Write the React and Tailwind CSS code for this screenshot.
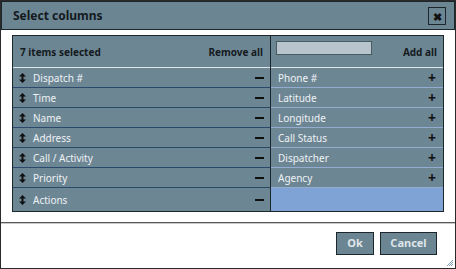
import React from "react";

const selected = ["Dispatch #", "Time", "Name", "Address", "Call / Activity", "Priority", "Actions"];
const available = ["Phone #", "Latitude", "Longitude", "Call Status", "Dispatcher", "Agency"];

const SortIcon = () => (
  <svg width="7" height="10" viewBox="0 0 7 10" className="shrink-0">
    <path d="M3.5 0 L7 3.5 H4.5 V6.5 H7 L3.5 10 L0 6.5 H2.5 V3.5 H0 Z" fill="#111" />
  </svg>
);

const SelectedRow = ({ label, last }) => (
  <div
    className={
      last
        ? "flex-1 min-h-[20px] flex items-center pl-[6px] pr-[6px]"
        : "h-[20px] flex items-center border-b border-[#2b4a6b] pl-[6px] pr-[6px]"
    }
  >
    <SortIcon />
    <span className="ml-[7px] pt-[1px] text-[#eef2f4]">{label}</span>
    <span className="ml-auto w-[9px] h-[2px] bg-[#111]" />
  </div>
);

const AvailableRow = ({ label }) => (
  <div className="h-[20px] flex items-center border-b border-[#93acd0] pl-[7px] pr-[7px]">
    <span className="pt-[1px] text-[#eef2f4]">{label}</span>
    <span className="ml-auto text-[#111] font-bold text-[14px] leading-none">+</span>
  </div>
);

export default function App() {
  return (
    <div
      className="w-[456px] h-[269px] bg-white border border-[#2a2a2a] flex flex-col relative text-[10px]"
      style={{ fontFamily: '"Noto Sans", "Open Sans", sans-serif' }}
    >
      {/* title bar */}
      <div className="h-[29px] shrink-0 bg-[#6b8593] border border-[#1d262b] flex items-center pl-[11px] pr-[8px] pt-[1px]">
        <span className="font-bold text-[#141a1e] text-[12px]">Select columns</span>
        <button className="ml-auto w-[18px] h-[18px] border border-[#1d262b] bg-[#6b8593] flex items-center justify-center text-[#111] text-[11px] font-bold leading-none">
          ✖
        </button>
      </div>

      {/* chooser panel */}
      <div className="mt-[5px] mx-[11px] h-[177px] border border-[#1d262b] bg-[#6d8694] flex">
        <div className="w-[258px] border-r border-[#1d262b] flex flex-col">
          <div className="h-[32px] shrink-0 flex items-center justify-between px-[7px] pt-[1px] border-b border-[#dfe6ea]">
            <span className="font-bold text-[#141a1e]">7 items selected</span>
            <span className="font-bold text-[#141a1e]">Remove all</span>
          </div>
          {selected.map((s, i) => (
            <SelectedRow key={s} label={s} last={i === selected.length - 1} />
          ))}
        </div>
        <div className="flex-1 flex flex-col">
          <div className="h-[32px] shrink-0 flex items-center px-[5px] pr-[6px] pt-[1px] border-b border-[#dfe6ea]">
            <input
              className="w-[96px] h-[14px] -mt-[8px] bg-[#b7c4cc] border border-[#4a5a63] outline-none"
              readOnly
            />
            <span className="ml-auto font-bold text-[#141a1e]">Add all</span>
          </div>
          {available.map((s) => (
            <AvailableRow key={s} label={s} />
          ))}
          <div className="flex-1 bg-[#7fa3d5]" />
        </div>
      </div>

      {/* separator */}
      <div className="mt-[10px] h-[1px] bg-[#5a5a5a]" />
      <div className="h-[1px] bg-[#c8c8c8]" />

      {/* buttons */}
      <div className="flex justify-end gap-[6px] pr-[18px] mt-[8px]">
        <button className="w-[38px] h-[23px] bg-[#6b8593] border border-[#1d262b] text-[#dfe6ea] font-bold text-[11px]">
          Ok
        </button>
        <button className="w-[57px] h-[23px] bg-[#6b8593] border border-[#1d262b] text-[#dfe6ea] font-bold text-[11px]">
          Cancel
        </button>
      </div>

      {/* resize grip */}
      <svg width="8" height="8" viewBox="0 0 8 8" className="absolute right-[1px] bottom-[1px]">
        <path d="M7 1 L1 7 M7 3 L3 7 M7 5 L5 7" stroke="#7a9ab8" strokeWidth="1" />
      </svg>
    </div>
  );
}
